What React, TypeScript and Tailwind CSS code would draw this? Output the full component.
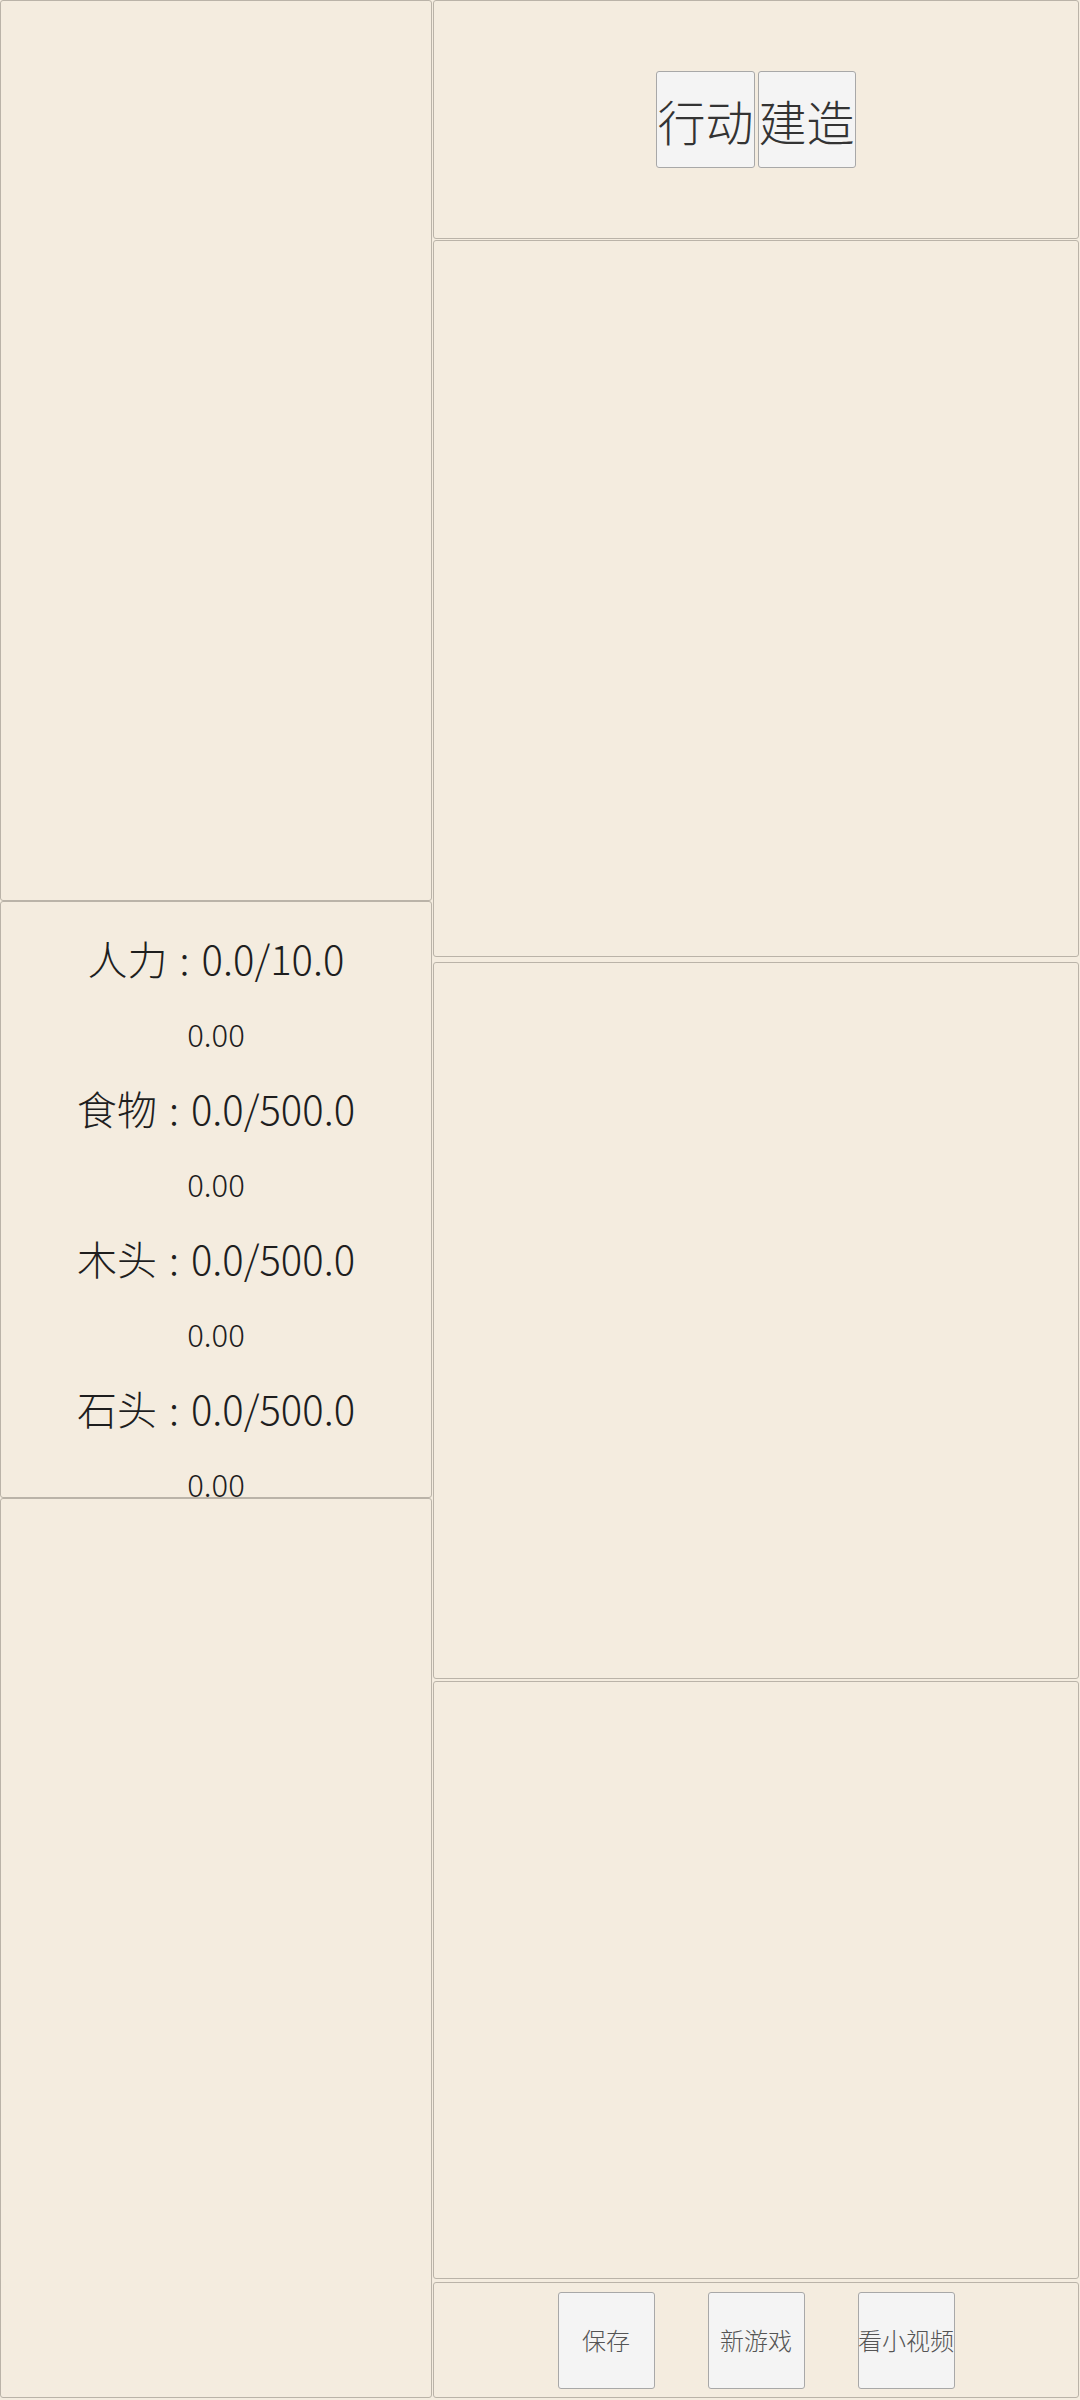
import React from 'react'

const stats = [
  { name: '人力', value: '0.0/10.0', rate: '0.00' },
  { name: '食物', value: '0.0/500.0', rate: '0.00' },
  { name: '木头', value: '0.0/500.0', rate: '0.00' },
  { name: '石头', value: '0.0/500.0', rate: '0.00' },
]

const font = "font-['Noto_Sans_CJK_SC',_'Noto_Sans',_sans-serif]"

const App = () => {
  return (
    <div className={`flex h-[2400px] w-[1080px] overflow-hidden bg-[#f4ecdf] ${font}`}>
      {/* left column */}
      <div className="flex w-[432px] flex-col">
        <div className="h-[901px] rounded-[3px] border border-[#bab3a8]"></div>
        <div className="h-[597px] rounded-[3px] border border-[#bab3a8] pt-[19px] text-center text-[#1e1e1e]">
          {stats.map((s) => (
            <div key={s.name}>
              <div className="h-[75px] text-[40px] font-light leading-[75px]">
                {s.name}
                <span className="mx-[12px]">:</span>
                {s.value}
              </div>
              <div className="h-[75px] text-[31px] font-light leading-[75px]">{s.rate}</div>
            </div>
          ))}
        </div>
        <div className="h-[900px] rounded-[3px] border border-[#bab3a8]"></div>
      </div>

      {/* right column */}
      <div className="flex w-[647px] flex-col pl-[1px]">
        <div className="flex h-[239px] items-center justify-center gap-[3px] rounded-[3px] border border-[#bab3a8]">
          <button className="flex h-[97px] items-center rounded-[3px] border border-[#a8a8a8] bg-[#f4f4f4] text-[48px] font-light text-[#333]">
            行动
          </button>
          <button className="flex h-[97px] items-center rounded-[3px] border border-[#a8a8a8] bg-[#f4f4f4] text-[48px] font-light text-[#333]">
            建造
          </button>
        </div>
        <div className="mt-[1px] h-[717px] rounded-[3px] border border-[#bab3a8]"></div>
        <div className="mt-[5px] h-[717px] rounded-[3px] border border-[#bab3a8]"></div>
        <div className="mt-[2px] h-[598px] rounded-[3px] border border-[#bab3a8]"></div>
        <div className="mt-[3px] flex h-[116px] items-center justify-center gap-[53px] rounded-[3px] border border-[#bab3a8]">
          {['保存', '新游戏', '看小视频'].map((t) => (
            <button
              key={t}
              className="flex h-[97px] w-[97px] items-center justify-center whitespace-nowrap rounded-[3px] border border-[#a8a8a8] bg-[#f4f4f4] text-[24px] font-light text-[#555]"
            >
              {t}
            </button>
          ))}
        </div>
      </div>
    </div>
  )
}

export default App
